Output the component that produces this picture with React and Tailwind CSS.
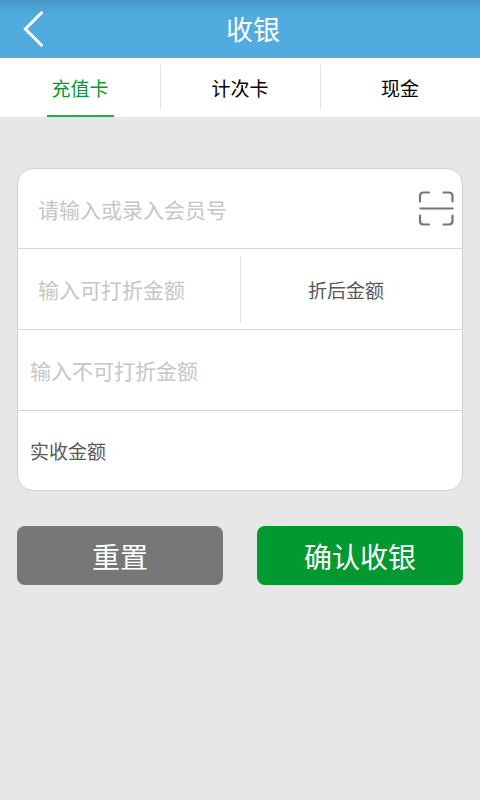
import { useState } from "react";

const TABS = ["充值卡", "计次卡", "现金"];

function BackIcon() {
  return (
    <svg width="20" height="36" viewBox="0 0 20 36" fill="none" stroke="currentColor" strokeWidth="3">
      <path d="M18.5 1.8 L2.4 18 L18.5 34.2" strokeLinecap="round" />
    </svg>
  );
}

function ScanIcon() {
  return (
    <svg width="36" height="36" viewBox="0 0 36 36" fill="none" stroke="currentColor" strokeWidth="2.2" strokeLinecap="round">
      <path d="M2 10.5 V5 Q2 1.5 5.5 1.5 H11" />
      <path d="M25.5 1.5 H31 Q34.5 1.5 34.5 5 V10.5" />
      <path d="M2 24.5 V30 Q2 33.5 5.5 33.5 H11" />
      <path d="M25.5 33.5 H31 Q34.5 33.5 34.5 30 V24.5" />
      <path d="M1.5 17.5 H35.5" strokeLinecap="butt" />
    </svg>
  );
}

function Header() {
  return (
    <header className="flex h-[58px] items-center bg-linear-to-b from-[#4796c5] to-[#51abde] to-25% pr-[17px] pl-[23px] text-white">
      <button type="button" aria-label="返回">
        <BackIcon />
      </button>
      <h1 className="flex-1 text-center text-[27px] leading-[38px]">收银</h1>
    </header>
  );
}

function Tabs({ active, onChange }) {
  return (
    <nav className="grid h-[59px] grid-cols-3 bg-white">
      {TABS.map((tab, i) => (
        <button
          key={tab}
          type="button"
          onClick={() => onChange(i)}
          className={`relative text-[19px] leading-[28px] ${i === active ? "text-[#049a30]" : "text-black"}`}
        >
          {tab}
          {i === active && (
            <span className="absolute inset-x-0 bottom-0 mx-auto h-0.5 w-[67px] bg-[#2ba550]" />
          )}
          {i > 0 && <span className="absolute top-[7px] bottom-[7px] left-0 w-px bg-[#e4e4e4]" />}
        </button>
      ))}
    </nav>
  );
}

function App() {
  const [active, setActive] = useState(0);
  const inputStyle =
    "h-full w-full min-w-0 bg-transparent text-[21px] text-[#585858] outline-none placeholder:text-[#c6c6c6]";

  return (
    <div className="min-h-screen bg-[#e7e7e7] font-['Noto_Sans_CJK_SC',sans-serif]">
      <Header />
      <Tabs active={active} onChange={setActive} />
      <form className="px-[17px] pt-[51px]">
        <div className="rounded-2xl border border-[#cfcfcf] bg-white text-[19px] text-[#585858]">
          <div className="flex h-20 items-center border-b border-[#d6d6d6] pr-2 pl-5">
            <input aria-label="会员号" placeholder="请输入或录入会员号" className={inputStyle} />
            <button type="button" aria-label="扫描" className="shrink-0 text-[#757575]">
              <ScanIcon />
            </button>
          </div>
          <div className="grid h-[81px] grid-cols-2 items-center border-b border-[#d6d6d6]">
            <div className="h-full pl-5">
              <input aria-label="可打折金额" placeholder="输入可打折金额" className={inputStyle} />
            </div>
            <div className="flex h-[67px] items-center border-l border-[#e4e4e4] pt-0.5 pl-[67px]">折后金额</div>
          </div>
          <div className="h-[81px] border-b border-[#d6d6d6] px-3">
            <input aria-label="不可打折金额" placeholder="输入不可打折金额" className={inputStyle} />
          </div>
          <div className="flex h-[79px] items-center px-3 pt-0.5">实收金额</div>
        </div>
        <div className="mt-[35px] grid grid-cols-2 gap-[34px] text-[28px] text-white">
          <button type="reset" className="h-[59px] rounded-lg bg-[#777777]">
            重置
          </button>
          <button type="button" className="h-[59px] rounded-lg bg-[#029930]">
            确认收银
          </button>
        </div>
      </form>
    </div>
  );
}

export default App;
